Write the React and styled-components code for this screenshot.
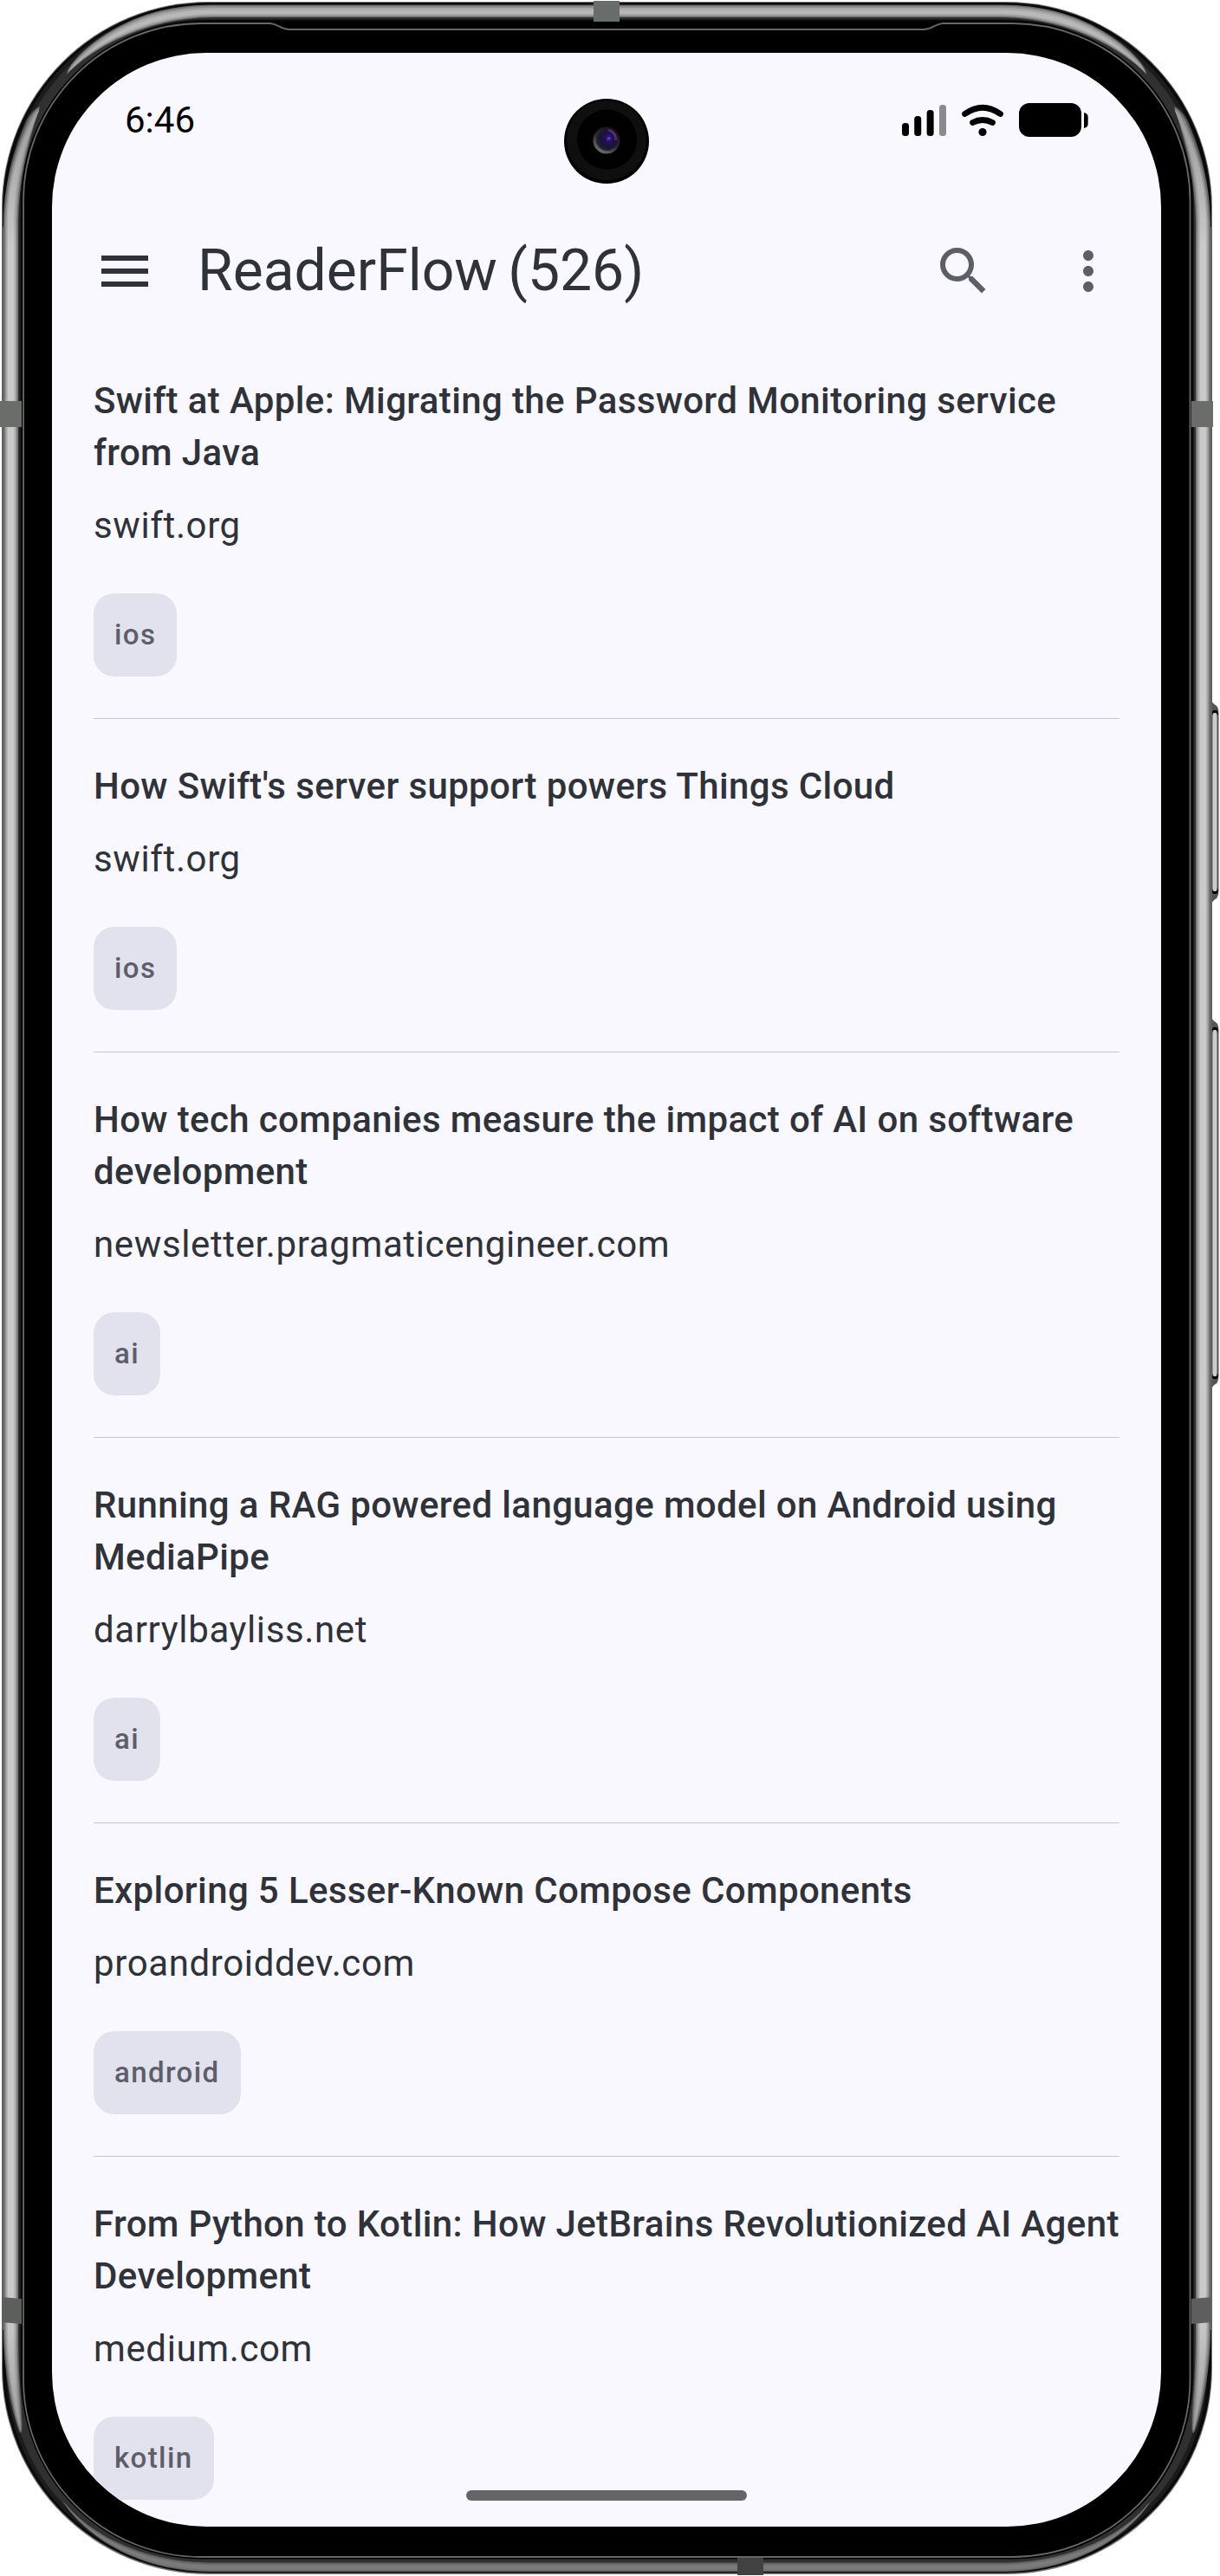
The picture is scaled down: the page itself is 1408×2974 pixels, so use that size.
import React from "react";
import styled, { createGlobalStyle } from "styled-components";

const GlobalStyle = createGlobalStyle`
  * { box-sizing: border-box; }
  html, body { margin: 0; padding: 0; background: #fff; }
  body { font-family: Roboto, "Liberation Sans", sans-serif; }
`;

const Device = styled.div`
  position: relative;
  width: 1408px;
  height: 2974px;
  padding: 61px 68px 57px 60px;
  overflow: hidden;
`;

const FrameArt = styled.svg`
  position: absolute;
  inset: 0;
  display: block;
`;

const Screen = styled.main`
  position: relative;
  display: flex;
  flex-direction: column;
  width: 1280px;
  height: 2856px;
  overflow: hidden;
  border-radius: 178px;
  background: #faf8ff;
  color: #2f3238;
`;

const StatusBar = styled.header`
  display: flex;
  flex: none;
  align-items: flex-start;
  justify-content: space-between;
  height: 180px;
  padding: 54px 84px 0 84px;
  color: #000;
`;

const Clock = styled.time`
  font-size: 42px;
  line-height: 48px;
`;

const StatusIcons = styled.svg`
  display: block;
  width: 216px;
  height: 48px;
`;

const AppBar = styled.div`
  display: flex;
  flex: none;
  align-items: center;
  height: 144px;
  padding: 0 48px;
`;

const AppTitle = styled.h1`
  flex: 1;
  margin: 0 0 0 48px;
  font-size: 66px;
  font-weight: 400;
  line-height: 84px;
  word-spacing: -4px;
`;

const IconButton = styled.button`
  display: flex;
  width: 72px;
  height: 72px;
  padding: 0;
  border: 0;
  margin-left: ${({ $gap }) => $gap || 0}px;
  background: none;
  color: ${({ $strong }) => ($strong ? "#2f3238" : "#5d5f68")};
`;

const Icon = styled.svg`
  width: 72px;
  height: 72px;
  fill: currentColor;
`;

const List = styled.ul`
  flex: none;
  padding: 0;
  margin: 0 48px;
  list-style: none;
`;

const Article = styled.li`
  display: flex;
  flex-direction: column;
  align-items: flex-start;
  padding: 48px 0;
  border-bottom: 1px solid #c6c6cf;
`;

const ArticleTitle = styled.h2`
  width: 1184px;
  margin: 0 0 24px;
  font-size: 42px;
  font-weight: 500;
  line-height: 60px;
  letter-spacing: 0.37px;
`;

const Source = styled.p`
  margin: 0 0 48px;
  font-size: 42px;
  line-height: 60px;
  letter-spacing: 0.62px;
`;

const Tag = styled.span`
  height: 96px;
  padding: 24px;
  border-radius: 24px;
  background: #e1e2ed;
  color: #5d5e69;
  font-size: 33px;
  font-weight: 500;
  line-height: 48px;
  letter-spacing: 1.4px;
`;

const Camera = styled.svg`
  position: absolute;
  top: 53px;
  left: 591px;
  width: 98px;
  height: 98px;
`;

const HomeIndicator = styled.div`
  position: absolute;
  bottom: 30px;
  left: 478px;
  width: 324px;
  height: 12px;
  border-radius: 6px;
  background: #656568;
`;

const articles = [
  { title: <>Swift at Apple: Migrating the Password Monitoring service<br />from Java</>, source: "swift.org", tag: "ios" },
  { title: "How Swift's server support powers Things Cloud", source: "swift.org", tag: "ios" },
  { title: <>How tech companies measure the impact of AI on software<br />development</>, source: "newsletter.pragmaticengineer.com", tag: "ai" },
  { title: <>Running a RAG powered language model on Android using<br />MediaPipe</>, source: "darrylbayliss.net", tag: "ai" },
  { title: "Exploring 5 Lesser-Known Compose Components", source: "proandroiddev.com", tag: "android" },
  { title: <>From Python to Kotlin: How JetBrains Revolutionized AI Agent<br />Development</>, source: "medium.com", tag: "kotlin" },
];

// Each metal rail is a stack of nested shapes: outer inset, inner inset, fill.
const sideLayers = [
  [0, 0, "url(#rail1)"],
  [2, 1.5, "url(#rail2)"],
  [3.5, 3, "url(#rail3)"],
  [5, 5, "url(#rail4)"],
];
const topLayers = [
  [0, 0, "#6a6a6a"],
  [1.5, 1, "#8f8f8f"],
  [3.5, 2.5, "#a8a8a8"],
  [6, 4, "#b8b8b8"],
];
const bottomLayers = [
  [0, 0, "#5e5e5e"],
  [1, 1.5, "#6f6f6f"],
  [2.5, 3, "#7b7b7b"],
];

function sideRail([o, i]) {
  return `M${46 - i * 0.2} ${123 + i}
    C${42 - i * 0.2} ${123 + i} ${36 + o * 0.5} ${130 + o} ${31 + o} ${138 + o * 0.5}
    C${14 + o} ${178} ${4 + o} ${214} ${4 + o} 262
    V2690
    C${4 + o} 2728 ${11 + o * 0.8} ${2778 - o} ${22 + o * 0.2} ${2807 - o}
    Q${25 - i * 0.3} ${2812 - i} ${25.500 - i * 0.5} ${2805 - i}
    C${26 - i} 2778 ${21 - i} 2752 ${21 - i} 2690
    V262
    C${21 - i} 214 ${30 - i} 173 ${46 - i * 0.2} ${123 + i}Z`;
}

function topRail([o, i]) {
  const left = 77 + i * 0.7;
  const mirror = (x) => 1400.500 - x;
  return `M${left} ${86 - i}
    C${79 + o} ${76} ${90 + o * 0.5} ${63 + o} ${108 + o * 0.4} ${49 + o * 0.8}
    C${148} ${20 + o} ${188} ${6 + o} 245 ${5.500 + o}
    H${mirror(245)}
    C${mirror(188)} ${6 + o} ${mirror(148)} ${20 + o} ${mirror(108 + o * 0.4)} ${49 + o * 0.8}
    C${mirror(90 + o * 0.5)} ${63 + o} ${mirror(79 + o)} 76 ${mirror(left)} ${86 - i}
    C${mirror(104)} ${58 - i} ${mirror(165)} ${21 - i} ${mirror(245)} ${20 - i}
    H245
    C165 ${21 - i} 104 ${58 - i} ${left} ${86 - i}Z`;
}

function bottomRail([o, i]) {
  const mirror = (x) => 1400.500 - x;
  const tip = 72 + i;
  return `M${tip} ${2887 + i}
    C100 ${2922 + i} 158 ${2957 + i} 240 ${2958.500 + i}
    H${mirror(240)}
    C${mirror(158)} ${2957 + i} ${mirror(100)} ${2922 + i} ${mirror(tip)} ${2887 + i}
    C${mirror(92)} ${2920 - o} ${mirror(150)} ${2968 - o} ${mirror(240)} ${2969 - o}
    H240
    C150 ${2968 - o} 92 ${2920 - o} ${tip} ${2887 + i}Z`;
}

function RailGradient({ id, end, middle }) {
  return (
    <linearGradient id={id} gradientUnits="userSpaceOnUse" x1="0" y1="123" x2="0" y2="2812">
      <stop offset="0" stopColor={end} />
      <stop offset=".06" stopColor={middle} />
      <stop offset=".95" stopColor={middle} />
      <stop offset="1" stopColor={end} />
    </linearGradient>
  );
}

function SideRails() {
  return (
    <g>
      {sideLayers.map((layer, index) => <path key={index} d={sideRail(layer)} fill={layer[2]} />)}
    </g>
  );
}

function SideButton({ y, height }) {
  return (
    <g>
      <path d={`M1397.500 ${y - 4}Q1400 ${y + 2} 1403 ${y + 3}Q1406.500 ${y + 5} 1406.500 ${y + 14}V${y + height - 14}Q1406.500 ${y + height - 5} 1403 ${y + height - 3}Q1400 ${y + height - 2} 1397.500 ${y + height + 4}Z`} fill="#555" />
      <rect x="1399" y={y + 9} width="6.500" height="7" rx="2.500" fill="#000" />
      <rect x="1399" y={y + height - 16} width="6.500" height="7" rx="2.500" fill="#000" />
      <rect x="1399.500" y={y + 12} width="5" height={height - 24} rx="2" fill="#ccc" />
    </g>
  );
}

function Frame() {
  return (
    <FrameArt width="1408" height="2974" viewBox="0 0 1408 2974" aria-hidden="true">
      <defs>
        <RailGradient id="rail1" end="#555" middle="#747474" />
        <RailGradient id="rail2" end="#777" middle="#999" />
        <RailGradient id="rail3" end="#888" middle="#b5b5b5" />
        <RailGradient id="rail4" end="#999" middle="#c9c9c9" />
      </defs>
      <SideButton y={811} height={230} />
      <SideButton y={1177} height={424} />
      <rect x="2" y="2" width="1397" height="2970" rx="238" fill="#777" />
      <rect x="3" y="3" width="1395" height="2967.500" rx="237" fill="#0a0a0a" />
      <rect x="15.500" y="14.500" width="1369.500" height="2945" rx="224" fill="none" stroke="#1c1c1c" strokeWidth="17" />
      <rect x="17" y="16.500" width="1366.500" height="2941" rx="222" fill="none" stroke="#303030" strokeWidth="11" />
      <path d="M3.500 262V2690M1397.500 262V2690" stroke="#595959" strokeWidth="2" />
      <SideRails />
      <g transform="matrix(-1 0 0 1 1401 0)"><SideRails /></g>
      {topLayers.map((layer, index) => <path key={index} d={topRail(layer)} fill={layer[2]} />)}
      {bottomLayers.map((layer, index) => <path key={index} d={bottomRail(layer)} fill={layer[2]} />)}
      <rect x="24.500" y="24.500" width="1352" height="2930" rx="208" fill="#000" />
      <path
        d="M312 27H232A205 205 0 0 0 27 232V2746A205 205 0 0 0 232 2952H1168A205 205 0 0 0 1373.500 2746V232A205 205 0 0 0 1168 27H1088C1078 28 1076 34 1066 34H334C324 34 322 28 312 27Z"
        fill="#000" stroke="#666" strokeWidth="1.800"
      />
      <rect x="685" y="1" width="30" height="24" fill="#686c6a" />
      <rect x="851" y="2953" width="30" height="20" fill="#414141" />
      <path d="M0 463H25V493H0ZM1375 463H1400V493H1375Z" fill="#6a6d69" />
      <path d="M2 2652L25 2654V2683L2 2681ZM1398.500 2652L1375 2654V2683L1398.500 2681Z" fill="#5d5f5d" />
    </FrameArt>
  );
}

function PunchHole() {
  return (
    <Camera viewBox="0 0 98 98" aria-hidden="true">
      <defs>
        <radialGradient id="lens" cx=".6" cy=".42" r=".6">
          <stop offset="0" stopColor="#42209c" />
          <stop offset=".3" stopColor="#21124f" />
          <stop offset=".7" stopColor="#1d1233" />
          <stop offset="1" stopColor="#162a38" />
        </radialGradient>
        <linearGradient id="rim" x1=".2" y1="1" x2=".8" y2="0">
          <stop stopColor="#777" /><stop offset=".5" stopColor="#292929" /><stop offset="1" stopColor="#160d1c" />
        </linearGradient>
      </defs>
      <circle cx="49" cy="49" r="49" fill="#000" />
      <circle cx="49" cy="48" r="46" fill="#0f0f0f" />
      <circle cx="49.500" cy="47" r="34.500" fill="#000" />
      <circle cx="49" cy="48" r="15.500" fill="url(#rim)" />
      <circle cx="49.500" cy="47.500" r="12.500" fill="url(#lens)" />
      <path d="M51 36Q60 39 60 48" fill="none" stroke="#774395" strokeWidth="2.500" opacity=".6" />
      <circle cx="51" cy="46.500" r="2" fill="#4c20c0" />
      <circle cx="52" cy="45.500" r=".8" fill="#a080f0" />
    </Camera>
  );
}

function App() {
  return (
    <Device>
      <GlobalStyle />
      <Frame />
      <Screen>
        <StatusBar>
          <Clock>6:46</Clock>
          <StatusIcons viewBox="1040 115 216 48" aria-hidden="true">
            <rect x="1041" y="142" width="8" height="15" rx="3.500" />
            <rect x="1055.200" y="134" width="8" height="23" rx="3.500" />
            <rect x="1069.600" y="127" width="8" height="30" rx="3.500" />
            <rect x="1084" y="121" width="8" height="36" rx="3.500" fill="#8b8a8e" />
            <path d="M1113.500 131.500Q1134 117 1154.500 131.500M1122.500 141.500Q1134 135.500 1145.500 141.500" fill="none" stroke="#000" strokeWidth="6.800" strokeLinecap="round" />
            <circle cx="1134" cy="152.500" r="4.600" />
            <rect x="1176" y="119" width="72" height="39" rx="12" />
            <path d="M1251 130Q1255.700 131 1255.700 135V143Q1255.700 147 1251 148Z" />
          </StatusIcons>
        </StatusBar>
        <AppBar>
          <IconButton $strong aria-label="Menu">
            <Icon viewBox="0 0 24 24"><path d="M3 18h18v-2H3v2zm0-5h18v-2H3v2zm0-7v2h18V6H3z" /></Icon>
          </IconButton>
          <AppTitle>ReaderFlow (526)</AppTitle>
          <IconButton aria-label="Search">
            <Icon viewBox="0 0 24 24"><path d="M15.500 14h-.79l-.28-.27A6.471 6.471 0 0 0 16 9.500 6.500 6.500 0 1 0 9.500 16c1.610 0 3.090-.59 4.230-1.570l.27.28v.79l5 4.990L20.490 19l-4.990-5zm-6 0C7.010 14 5 11.990 5 9.500S7.010 5 9.500 5 14 7.010 14 9.500 11.990 14 9.500 14z" /></Icon>
          </IconButton>
          <IconButton $gap={72} aria-label="More options">
            <Icon viewBox="0 0 24 24"><path d="M12 8c1.100 0 2-.9 2-2s-.9-2-2-2-2 .9-2 2 .9 2 2 2zm0 2c-1.100 0-2 .9-2 2s.9 2 2 2 2-.9 2-2-.9-2-2-2zm0 6c-1.100 0-2 .9-2 2s.9 2 2 2 2-.9 2-2-.9-2-2-2z" /></Icon>
          </IconButton>
        </AppBar>
        <List>
          {articles.map((article, index) => (
            <Article key={index}>
              <ArticleTitle>{article.title}</ArticleTitle>
              <Source>{article.source}</Source>
              <Tag>{article.tag}</Tag>
            </Article>
          ))}
        </List>
        <PunchHole />
        <HomeIndicator />
      </Screen>
    </Device>
  );
}

export default App;
